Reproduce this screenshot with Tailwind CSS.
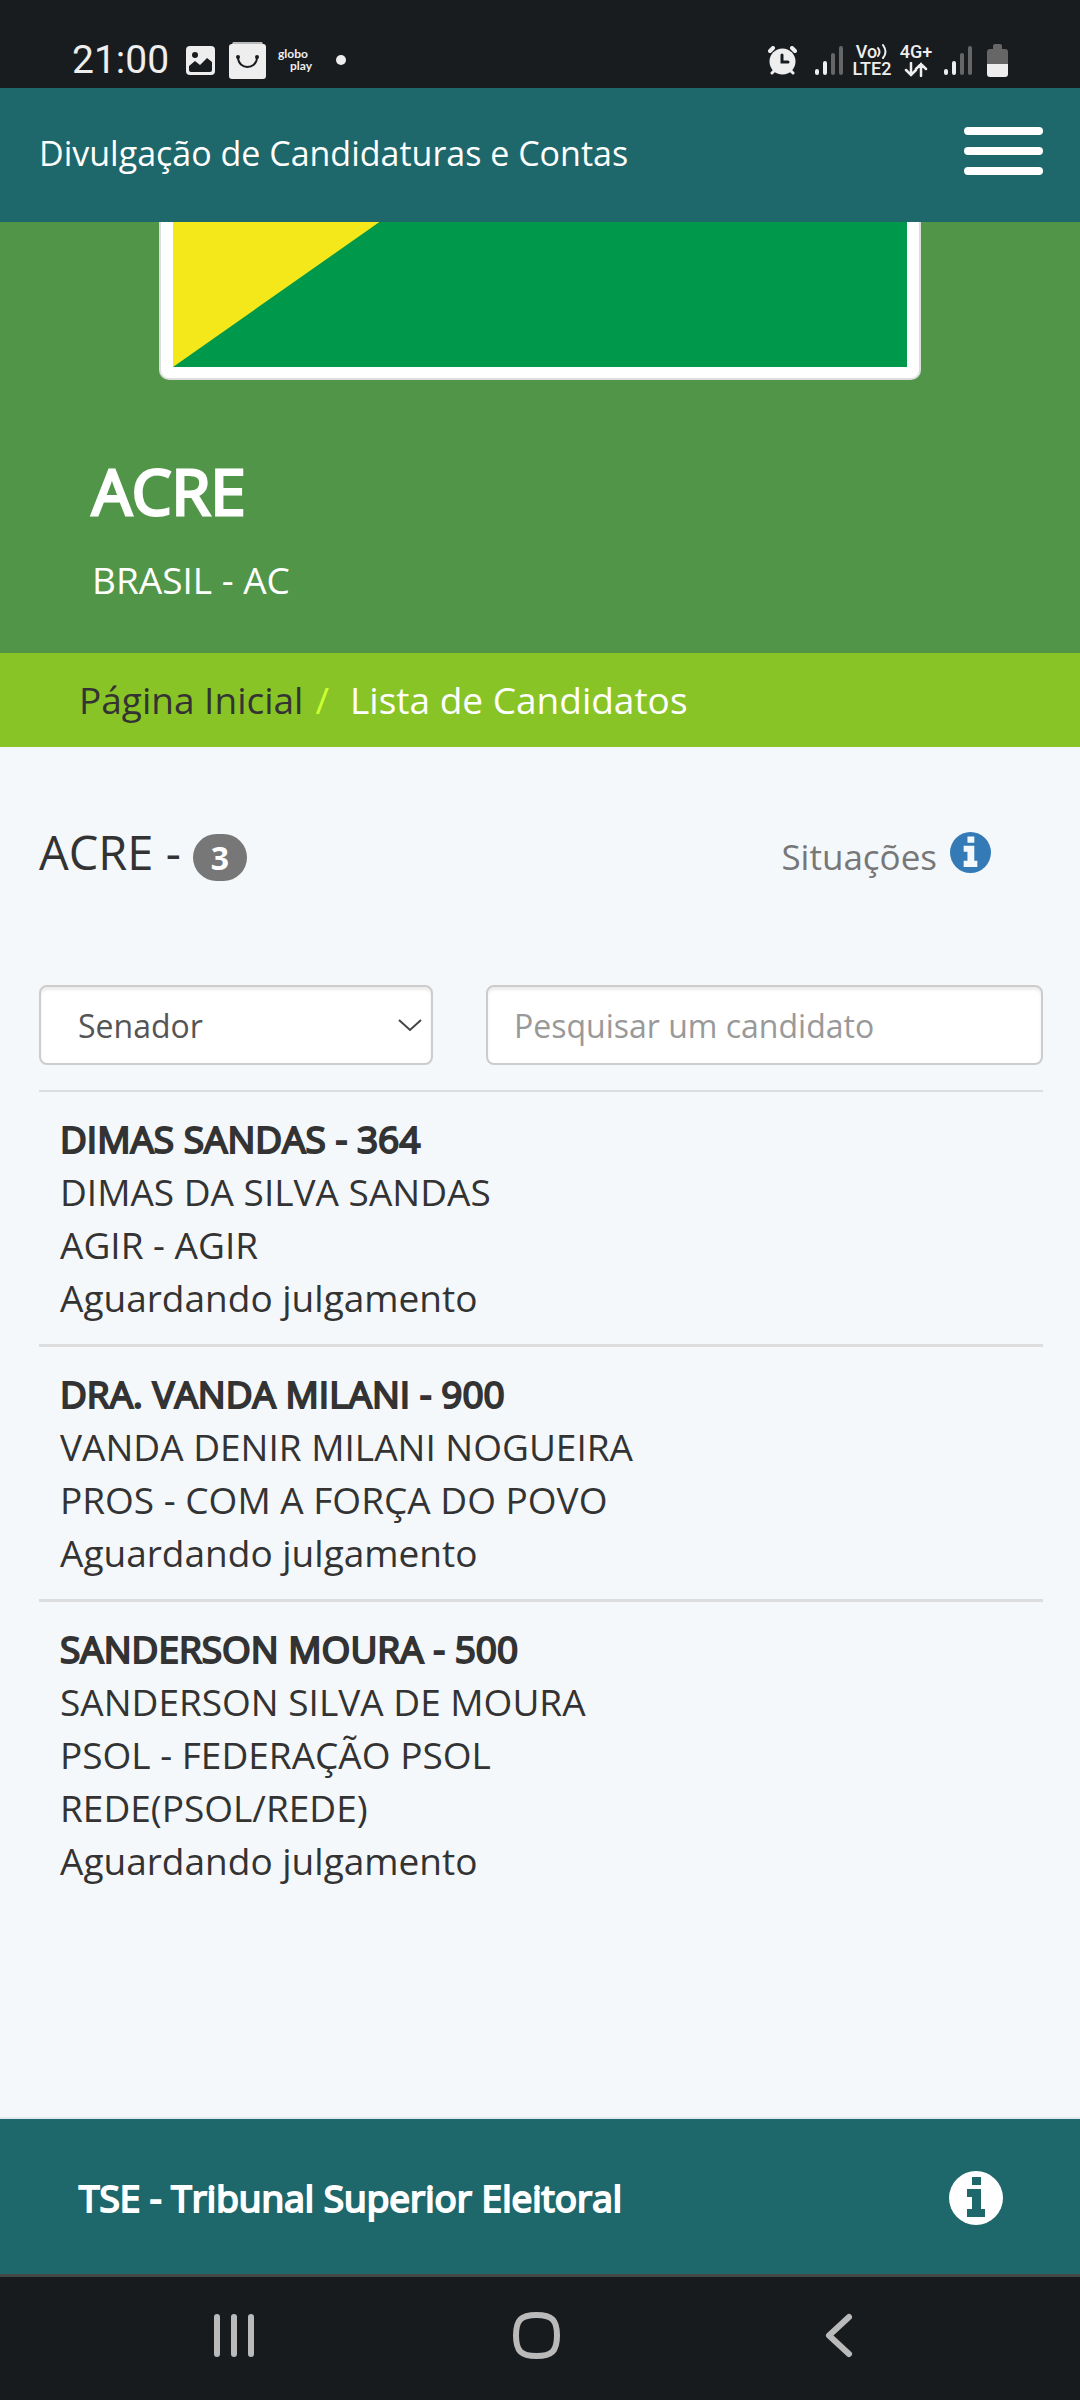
<!DOCTYPE html>
<html lang="pt-BR">
<head>
  <meta charset="UTF-8" />
  <meta name="viewport" content="width=device-width, initial-scale=1.0" />
  <title>Divulgação de Candidaturas e Contas</title>
  <script src="https://cdn.jsdelivr.net/npm/@tailwindcss/browser@4"></script>
</head>

<body class="flex min-h-screen flex-col bg-[#f4f8fb] font-['Open_Sans',sans-serif] text-[37px] leading-[53px] text-[#333]">

  <!-- Status bar -->
  <div class="flex h-[88px] items-center justify-between bg-[#191c1f] pt-8 pr-[72px] pl-[72px] font-[Roboto,sans-serif] text-[#eee]">
    <div class="flex items-center">
      <span class="w-[114px] text-[39px] leading-[56px]">21:00</span>
      <svg class="mr-[14px] size-[29px]" viewBox="0 0 29 29">
        <rect width="29" height="29" rx="4" fill="#eee" />
        <circle cx="9" cy="9" r="3" fill="#191c1f" />
        <path d="M3 20 L9 15 L14 19 L21 12 L26 16 V24 Q26 26 24 26 H5 Q3 26 3 24 Z" fill="#191c1f" />
      </svg>
      <svg class="mr-3 size-[37px]" viewBox="0 0 37 37">
        <path d="M4 0 H33 L35 4 H2 Z" fill="#bbb" />
        <rect y="2" width="37" height="35" rx="3" fill="#eee" />
        <path d="M9 16 C10 28 27 28 28 16" fill="none" stroke="#191c1f" stroke-width="2" />
        <circle cx="9" cy="15" r="2" fill="#191c1f" />
        <circle cx="28" cy="15" r="2" fill="#191c1f" />
      </svg>
      <div class="flex w-[34px] flex-col font-[Lato,sans-serif] text-[12px] leading-[12px] font-bold">
        <span>globo</span>
        <span class="text-right">play</span>
      </div>
      <span class="ml-6 size-[10px] rounded-full bg-[#eee]"></span>
    </div>
    <div class="flex items-center">
      <svg class="mr-[18px] size-[29px]" viewBox="0 0 29 29" fill="none" stroke="#eee" stroke-width="4" stroke-linecap="round">
        <path d="M2 5 L5 2 M27 5 L24 2" />
        <path d="M4 27 L7 24 M25 27 L22 24" stroke-width="3" />
        <circle cx="14.500" cy="15.500" r="13" fill="#eee" stroke="none" />
        <path d="M14 9 V16 H20" stroke="#191c1f" stroke-width="3" />
      </svg>
      <svg class="mr-2 h-[29px] w-[29px]" viewBox="0 0 29 29" stroke-width="4" stroke-linecap="round">
        <path d="M2 25 V27 M10 17 V27" stroke="#eee" />
        <path d="M18 9 V27 M26 2 V27" stroke="#666" />
      </svg>
      <div class="mr-2 flex w-10 flex-col items-center text-[18px] leading-[17px] font-medium">
        <span class="flex items-center">
          Vo
          <svg class="h-[17px] w-[11px]" viewBox="0 0 11 17" fill="none" stroke="#eee" stroke-width="2" stroke-linecap="round">
            <path d="M1 5 Q4 9 1 13 M6 2 Q11 9 6 15" />
          </svg>
        </span>
        <span>LTE2</span>
      </div>
      <div class="mr-3 flex h-[34px] w-8 flex-col items-center text-[18px] leading-[17px] font-medium">
        <span>4G+</span>
        <svg class="mt-[2px] h-[15px] w-6 shrink-0" viewBox="0 0 24 15" fill="none" stroke="#eee" stroke-width="2.500" stroke-linecap="round">
          <path d="M7 1 V13 M2 8 L7 13 L12 8 M17 14 V2 M12 7 L17 2 L22 7" />
        </svg>
      </div>
      <svg class="mr-[14px] h-[29px] w-[29px]" viewBox="0 0 29 29" stroke-width="4" stroke-linecap="round">
        <path d="M2 25 V27 M10 17 V27" stroke="#eee" />
        <path d="M18 9 V27 M26 2 V27" stroke="#666" />
      </svg>
      <svg class="h-[33px] w-[21px]" viewBox="0 0 21 33">
        <path d="M6 5 V2 Q6 0 8 0 H13 Q15 0 15 2 V5 H18 Q21 5 21 8 V20 H0 V8 Q0 5 3 5 Z" fill="#666" />
        <path d="M0 20 H21 V30 Q21 33 18 33 H3 Q0 33 0 30 Z" fill="#eee" />
      </svg>
    </div>
  </div>

  <!-- Header -->
  <header class="flex h-[134px] items-center justify-between bg-[#1e676b] pr-[37px] pb-1 pl-[39px] text-white">
    <a href="#" class="text-[34px]">Divulgação de Candidaturas e Contas</a>
    <button type="button" aria-label="Menu" class="flex w-[79px] flex-col gap-3 pb-1">
      <span class="h-2 w-full rounded-sm bg-white"></span>
      <span class="h-2 w-full rounded-sm bg-white"></span>
      <span class="h-2 w-full rounded-sm bg-white"></span>
    </button>
  </header>

  <!-- State -->
  <section class="bg-[#519648] pb-[47px] text-white">
    <div class="mx-auto h-[158px] w-[762px] rounded-b-[10px] border-x-2 border-b-2 border-[#ddd] bg-white px-[12px] pb-[11px]">
      <svg class="block h-full w-full" viewBox="0 0 736 145" preserveAspectRatio="none">
        <rect width="736" height="145" fill="#00984a" />
        <path d="M0 0 H207 L0 145 Z" fill="#f4e81a" />
      </svg>
    </div>
    <div class="px-[92px] pt-[68px]">
      <h1 class="text-[63px] leading-[86px] [-webkit-text-stroke:3px_currentColor]">ACRE</h1>
      <p class="mt-[19px]">BRASIL - AC</p>
    </div>
  </section>

  <!-- Breadcrumb -->
  <nav class="flex h-[94px] items-center bg-[#89c427] px-[79px] pb-[2px]">
    <a href="#" class="text-[#333]">Página Inicial</a>
    <span class="mr-[21px] ml-[12px] text-[#ccff33]">/</span>
    <span class="text-white">Lista de Candidatos</span>
  </nav>

  <main class="flex-1 pt-[79px] pr-[37px] pl-[39px]">
    <div class="flex items-baseline justify-between pr-[52px]">
      <h2 class="flex items-baseline gap-3 text-[47px] leading-[52px]">
        ACRE -
        <span class="rounded-full bg-[#777] px-[18px] text-[32px] leading-[47px] font-bold text-white">3</span>
      </h2>
      <a href="#" class="flex gap-[13px] text-[35px] text-[#777]">
        Situações
        <svg class="mt-[2px] size-[41px]" viewBox="0 0 54 54">
          <circle cx="27" cy="27" r="27" fill="#337ab7" />
          <path d="M23 6 H32 V14 H23 Z M18 18 H32 V38 H36 V46 H18 V38 H23 V26 H18 Z" fill="#f4f8fb" />
        </svg>
      </a>
    </div>

    <form class="mt-[102px] flex gap-[53px] text-[32px]">
      <div class="relative w-[394px]">
        <select name="cargo" aria-label="Cargo" class="h-[80px] w-full appearance-none rounded-lg border-2 border-[#ccc] bg-white pl-[37px] text-[#555] shadow-[inset_0_3px_3px_rgba(0,0,0,0.075)]">
          <option>Senador</option>
          <option>Governador</option>
          <option>Deputado Federal</option>
          <option>Deputado Estadual</option>
        </select>
        <svg class="pointer-events-none absolute top-[33px] right-[11px] h-[14px] w-6" viewBox="0 0 24 14" fill="none" stroke="#444" stroke-width="2">
          <path d="M1 2 L12 12 L23 2" />
        </svg>
      </div>
      <div class="flex-1">
        <input name="busca" type="text" placeholder="Pesquisar um candidato" aria-label="Pesquisar um candidato"
               class="h-[80px] w-full rounded-lg border-2 border-[#ccc] bg-white px-[26px] text-[#555] shadow-[inset_0_3px_3px_rgba(0,0,0,0.075)] placeholder:text-[#999]" />
      </div>
    </form>

    <ul class="mt-[25px]">
      <li class="border-t-2 border-[#ddd] px-[21px] py-5">
        <div class="w-2/3">
          <p class="[-webkit-text-stroke:2px_currentColor]">DIMAS SANDAS - 364</p>
          <p>DIMAS DA SILVA SANDAS</p>
          <p>AGIR - AGIR</p>
          <p>Aguardando julgamento</p>
        </div>
      </li>
      <li class="border-t-3 border-[#ddd] px-[21px] py-5">
        <div class="w-2/3">
          <p class="[-webkit-text-stroke:2px_currentColor]">DRA. VANDA MILANI - 900</p>
          <p>VANDA DENIR MILANI NOGUEIRA</p>
          <p>PROS - COM A FORÇA DO POVO</p>
          <p>Aguardando julgamento</p>
        </div>
      </li>
      <li class="border-t-3 border-[#ddd] px-[21px] py-5">
        <div class="w-2/3">
          <p class="[-webkit-text-stroke:2px_currentColor]">SANDERSON MOURA - 500</p>
          <p>SANDERSON SILVA DE MOURA</p>
          <p>PSOL - FEDERAÇÃO PSOL REDE(PSOL/REDE)</p>
          <p>Aguardando julgamento</p>
        </div>
      </li>
    </ul>
  </main>

  <!-- Footer -->
  <footer class="flex h-[157px] items-center justify-between border-t-2 border-[#dde9ec] bg-[#1e676b] pt-[2px] pr-[77px] pl-[79px] text-white">
    <p class="[-webkit-text-stroke:2px_currentColor]">TSE - Tribunal Superior Eleitoral</p>
    <button type="button" aria-label="Informações">
      <svg class="size-[54px]" viewBox="0 0 54 54">
        <circle cx="27" cy="27" r="27" fill="#fff" />
        <path d="M23 6 H32 V14 H23 Z M18 18 H32 V38 H36 V46 H18 V38 H23 V26 H18 Z" fill="#1e676b" />
      </svg>
    </button>
  </footer>

  <!-- Android navigation -->
  <div class="grid h-[126px] grid-cols-3 place-items-center border-t-3 border-[#444748] bg-[#181b1e] pr-[90px] pb-[6px] pl-[83px]">
    <button type="button" aria-label="Recentes">
      <svg class="h-[47px] w-[47px]" viewBox="0 0 47 47" stroke="#bababa" stroke-width="6" stroke-linecap="round">
        <path d="M6 5 V42 M23 5 V42 M40 5 V42" />
      </svg>
    </button>
    <button type="button" aria-label="Início">
      <svg class="h-[47px] w-[47px]" viewBox="0 0 47 47" fill="none" stroke="#bababa" stroke-width="6">
        <path d="M23.500 3 C39 3 44 8 44 23.500 C44 39 39 44 23.500 44 C8 44 3 39 3 23.500 C3 8 8 3 23.500 3 Z" />
      </svg>
    </button>
    <button type="button" aria-label="Voltar">
      <svg class="h-[47px] w-[47px]" viewBox="0 0 47 47" fill="none" stroke="#bababa" stroke-width="6" stroke-linecap="round" stroke-linejoin="round">
        <path d="M34 5 L14 23.500 L34 42" />
      </svg>
    </button>
  </div>
</body>
</html>
